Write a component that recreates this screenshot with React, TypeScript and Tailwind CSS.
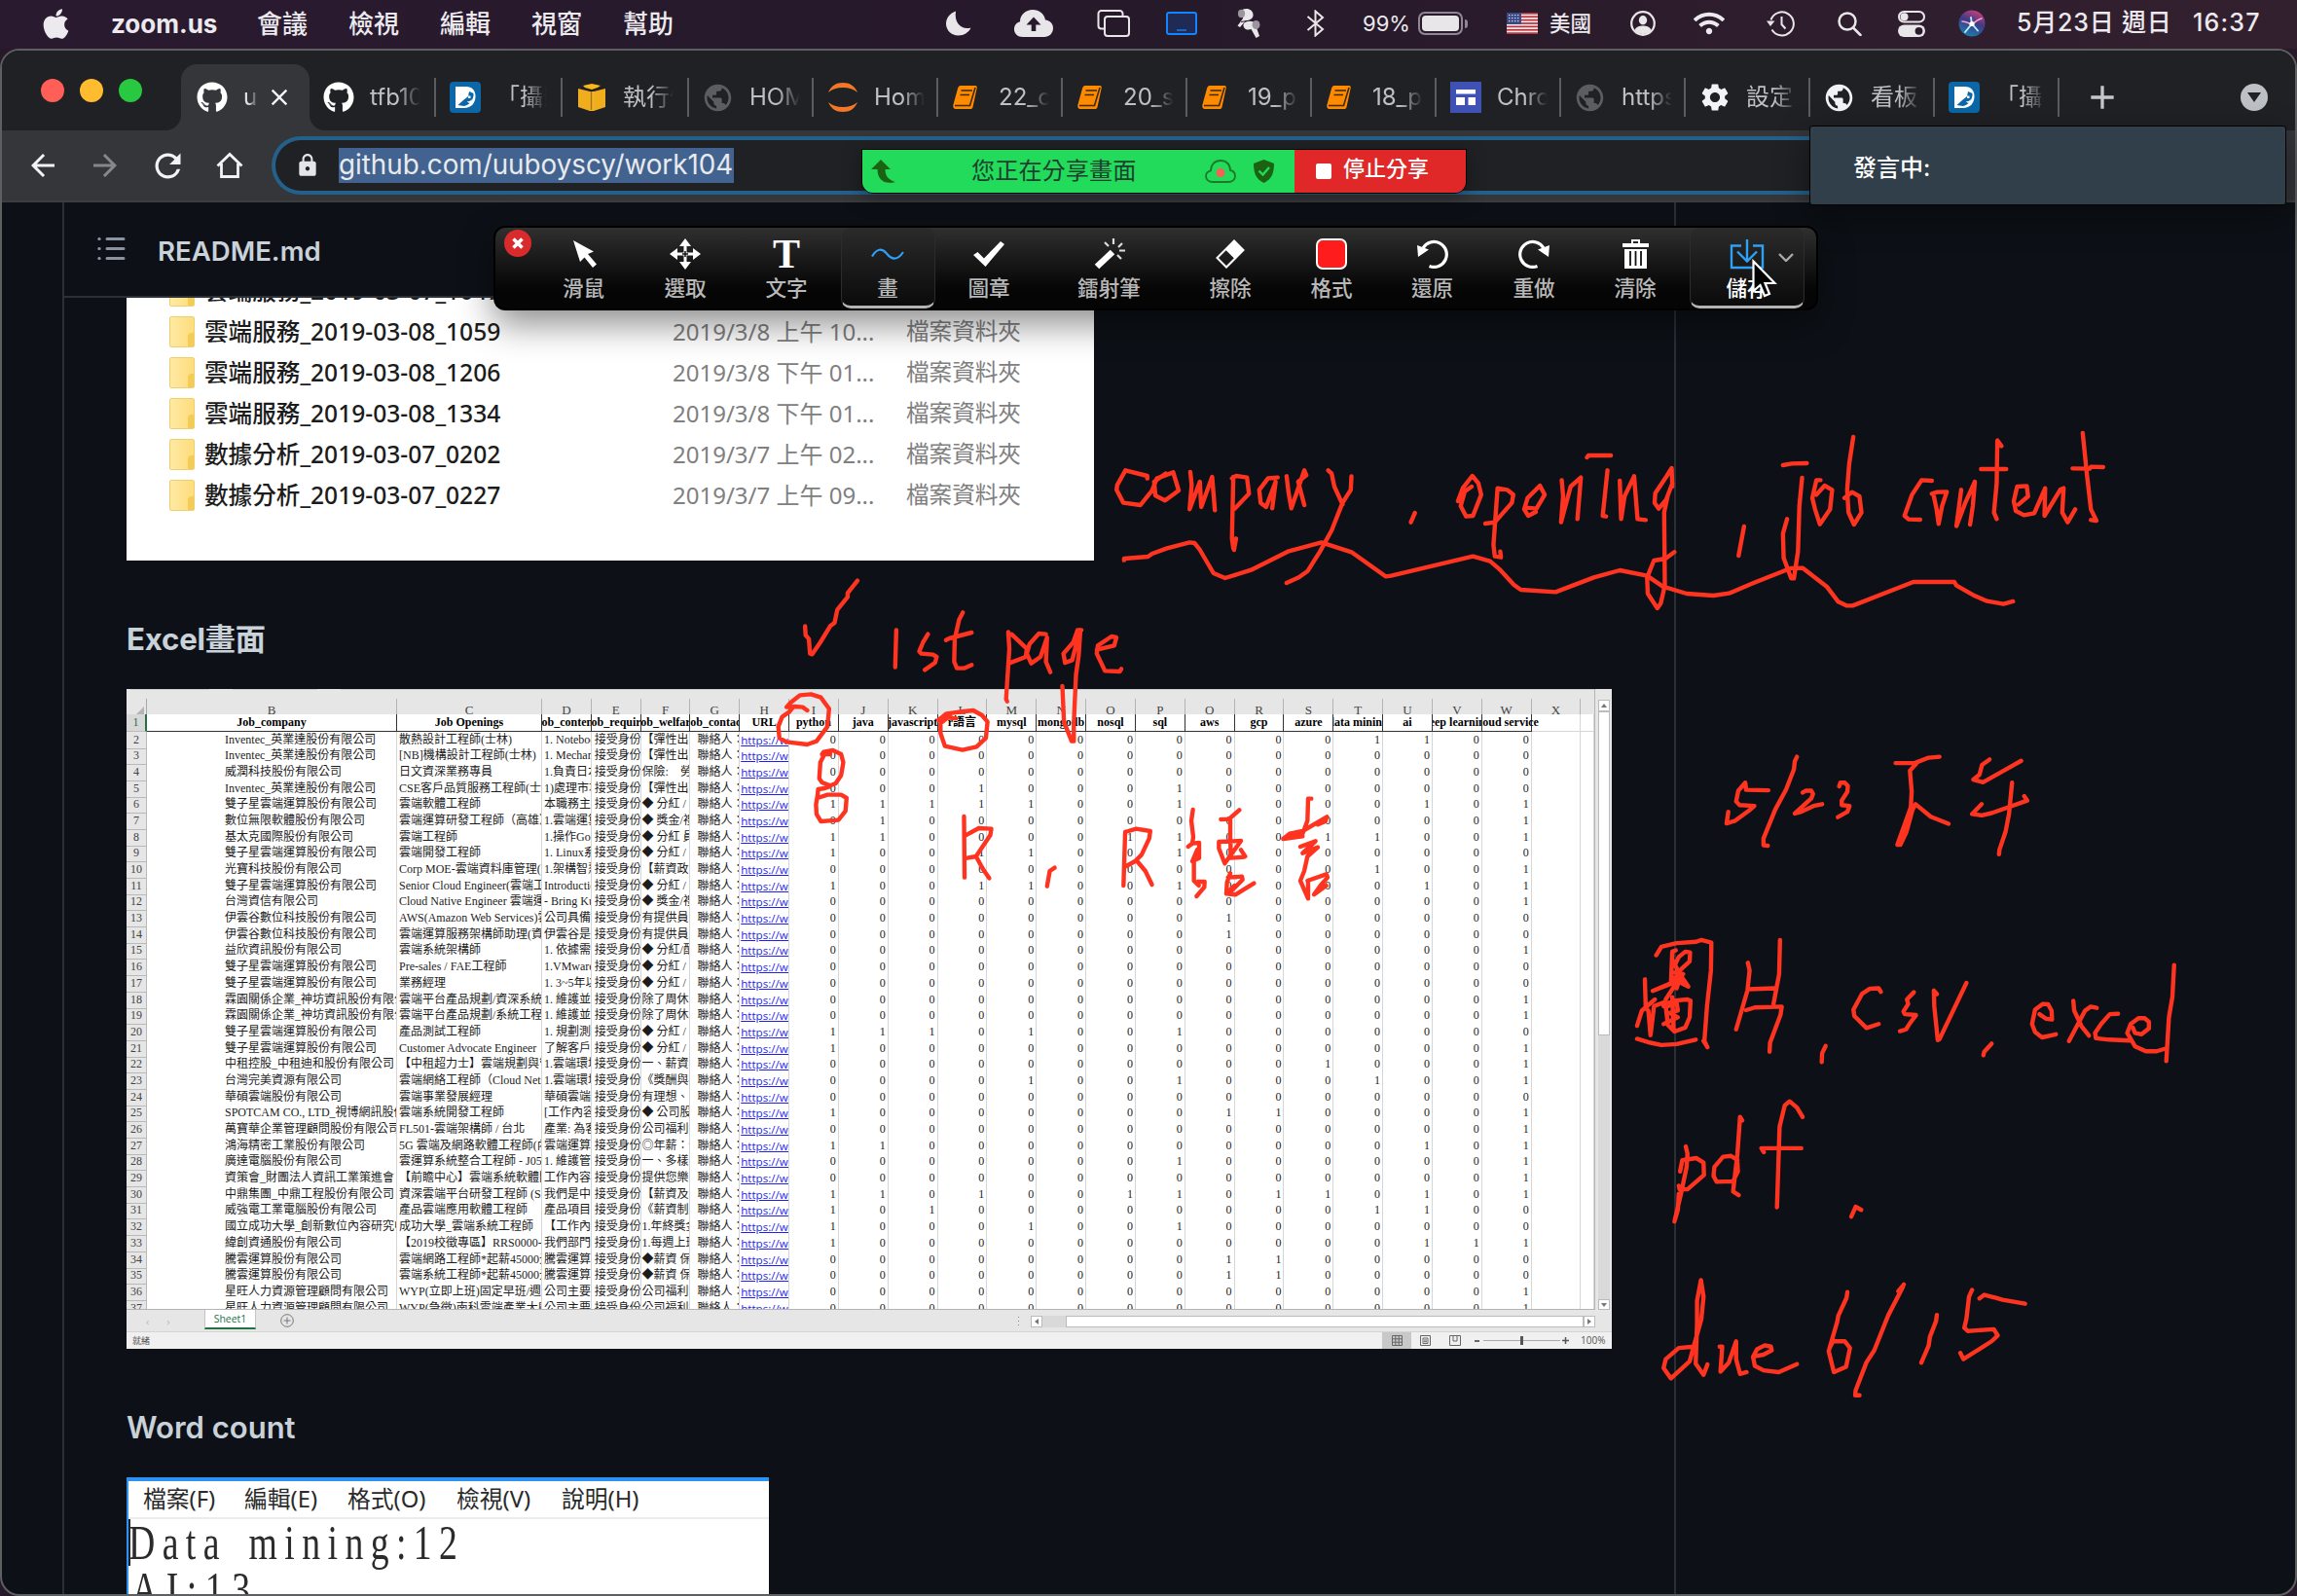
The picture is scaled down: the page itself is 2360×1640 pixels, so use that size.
import React from "react";
import { FaApple, FaGithub, FaWifi } from "react-icons/fa";
import { MdArrowBack, MdArrowForward, MdRefresh, MdLock, MdPublic, MdSettings, MdClose, MdAdd } from "react-icons/md";

/* ---------- macOS menu bar ---------- */

const Moon = () => (
  <svg className="h-[26px] w-[26px]" viewBox="0 0 26 26"><path fill="#e9e6ea" d="M10 0.5C4 2.500 0 7.500 0 13.500C0 20 5.500 25.500 12.500 25.500C18.500 25.500 23.500 22 25.500 17.500C16 20 8 13 10 0.500Z" /></svg>
);
const CloudUp = () => (
  <svg className="h-[28px] w-[40px]" viewBox="0 0 40 28">
    <path fill="#e9e6ea" d="M9 28C3.500 28 0 24.500 0 20C0 16 2.500 13 6 12.200C6 5 12 0 19 0C26 0 31 4.500 32 10.500C37 11 40 14.500 40 19C40 24 36 28 31 28Z" />
    <path fill="#261a2b" d="M20 7.500L27.500 15.500H22.300V22H17.700V15.500H12.500Z" />
  </svg>
);
const Copies = () => (
  <svg className="h-[28px] w-[34px]" viewBox="0 0 34 28" fill="none" stroke="#e9e6ea" strokeWidth="2">
    <path d="M7 19.500H4.500A3 3 0 0 1 1.500 16.500V4A3 3 0 0 1 4.500 1H23.500A3 3 0 0 1 26.500 4V6" />
    <rect x="8" y="7" width="25" height="20" rx="3" />
  </svg>
);
const Tablet = () => (
  <div className="flex h-[24px] w-[32px] items-end justify-center rounded-[3px] border-2 border-[#1384ff] bg-[#1f2b55] pb-[2px]"><div className="h-[2px] w-[10px] bg-[#1a65c0]" /></div>
);
const Buds = () => (
  <svg className="h-[32px] w-[24px]" viewBox="0 0 24 32">
    <path fill="#e9e6ea" d="M6 1.500C12 -0.500 17 3 16.500 8C16 11.500 13 13 9 13L3 20L0.500 18.500L6 11Z" /><ellipse cx="4.500" cy="6" rx="3.600" ry="4.200" fill="#9b959d" />
    <path fill="#e9e6ea" d="M6.500 17C8 13.500 14 13 18 15L23 29L19.500 31L14.500 22C10 23.500 6 21.500 6.500 17Z" /><ellipse cx="19.500" cy="17.500" rx="4" ry="4.500" fill="#9b959d" />
    <path d="M4 14.500L10 13.500M14 13L17 13.500" stroke="#2a1c2e" strokeWidth="1" />
  </svg>
);
const Bluetooth = () => (
  <svg className="h-[28px] w-[19px]" viewBox="0 0 19 28" fill="none" stroke="#e9e6ea" strokeWidth="2"><path d="M1.500 7L17 20L9.500 26.500V1.500L17 8L1.500 21" /></svg>
);
const Battery = () => (
  <div className="flex items-center gap-[2px]">
    <div className="flex h-[24px] w-[46px] rounded-[7px] border-2 border-[#8f8893] p-[2px]"><div className="flex-1 rounded-[4px] bg-[#e9e6ea]" /></div>
    <div className="h-[9px] w-[3px] rounded-r-full bg-[#8f8893]" />
  </div>
);
const Flag = () => (
  <svg className="h-[22px] w-[32px]" viewBox="0 0 32 22">
    <rect width="32" height="22" fill="#f2eeee" />
    {[0, 1, 2, 3, 4, 5, 6].map((i) => <rect key={i} y={i * 3.38} width="32" height="1.700" fill="#b8313b" />)}
    <rect width="15" height="12" fill="#3b4a86" />
    {[2, 5, 8].map((y) => [2, 5, 8, 11].map((x) => <rect key={`${x}-${y}`} x={x} y={y} width="1.400" height="1.200" fill="#d5d8e8" />))}
  </svg>
);
const UserRing = () => (
  <svg className="h-[26px] w-[26px]" viewBox="0 0 26 26">
    <circle cx="13" cy="13" r="11.800" fill="none" stroke="#e9e6ea" strokeWidth="2.200" /><ellipse cx="13" cy="9.700" rx="4.200" ry="4.700" fill="#e9e6ea" /><path fill="#e9e6ea" d="M4.500 20C6 16.500 9 15.500 13 15.500S20 16.500 21.500 20C19 23 16.500 24 13 24S7 23 4.500 20Z" />
  </svg>
);
const Clock = () => (
  <svg className="h-[27px] w-[29px]" viewBox="0 0 29 27" fill="none" stroke="#e9e6ea" strokeWidth="2">
    <path d="M4.500 9.500A12 12 0 1 1 5.500 19.500" /><path d="M15.500 6V14L19.500 18.500" /><path d="M0 10.500H8.500L4 16Z" fill="#e9e6ea" stroke="none" />
  </svg>
);
const Search = () => (
  <svg className="h-[25px] w-[25px]" viewBox="0 0 25 25" fill="none" stroke="#e9e6ea" strokeWidth="2.500"><circle cx="10" cy="10" r="8.500" /><path d="M16 16.500L23.500 24" strokeLinecap="round" /></svg>
);
const Control = () => (
  <svg className="h-[27px] w-[28px]" viewBox="0 0 28 27">
    <rect x="1" y="1" width="26" height="10.500" rx="5.250" fill="none" stroke="#e9e6ea" strokeWidth="2" /><circle cx="6.500" cy="6.200" r="4" fill="#e9e6ea" />
    <rect x="0" y="14.500" width="28" height="12.500" rx="6.250" fill="#e9e6ea" /><circle cx="21.500" cy="20.800" r="3.900" fill="#2a1c2c" />
  </svg>
);
const Siri = () => (
  <svg className="h-[28px] w-[28px]" viewBox="0 0 28 28">
    <defs><linearGradient id="siri" x1="0.700" y1="0" x2="0.300" y2="1"><stop offset="0" stopColor="#c93f7c" /><stop offset="0.450" stopColor="#3f3a86" /><stop offset="1" stopColor="#1c7fb0" /></linearGradient></defs>
    <circle cx="14" cy="14" r="13.500" fill="url(#siri)" />
    <path d="M4 12C8 12 11 14 14 15C17 13 20 10 24 9" stroke="#ff9fc4" strokeWidth="1.600" fill="none" strokeLinecap="round" />
    <path d="M7 23L14 14.500L20 21.500M14 15L13 8" stroke="#b9f2ff" strokeWidth="1.800" fill="none" strokeLinecap="round" /><circle cx="14" cy="14.500" r="2.600" fill="#fff" />
  </svg>
);

const MenuBar = () => (
  <div className="flex h-[50px] w-full items-center bg-gradient-to-r from-[#2a1a30] via-[#26192a] to-[#33202f] pb-[2px] text-[26px] text-[#eceaee]">
    <div className="w-[114px] pl-[40px]"><FaApple className="h-[35px] w-[35px] text-[#eceaee]" /></div>
    <div className="w-[150px] text-[26px] font-bold">zoom.us</div>
    <div className="w-[94px] font-medium">會議</div>
    <div className="w-[94px] font-medium">檢視</div>
    <div className="w-[94px] font-medium">編輯</div>
    <div className="w-[94px] font-medium">視窗</div>
    <div className="w-[332px] font-medium">幫助</div>
    <div className="w-[70px]"><Moon /></div>
    <div className="w-[85px]"><CloudUp /></div>
    <div className="w-[71px]"><Copies /></div>
    <div className="w-[73px]"><Tablet /></div>
    <div className="w-[71px]"><Buds /></div>
    <div className="w-[58px]"><Bluetooth /></div>
    <div className="w-[57px] text-[22px]">99%</div>
    <div className="w-[91px]"><Battery /></div>
    <div className="w-[44px]"><Flag /></div>
    <div className="w-[83px] text-[21.500px] font-medium">美國</div>
    <div className="w-[65px]"><UserRing /></div>
    <div className="w-[75px]"><FaWifi className="h-[32px] w-[32px]" /></div>
    <div className="w-[73px]"><Clock /></div>
    <div className="w-[62px]"><Search /></div>
    <div className="w-[62px]"><Control /></div>
    <div className="w-[60px]"><Siri /></div>
    <div className="w-[181px] text-[25px] font-medium tracking-[0.800px] whitespace-nowrap">5月23日 週日</div>
    <div className="text-[25px] font-medium tracking-[1.200px]">16:37</div>
  </div>
);

/* ---------- browser chrome ---------- */

const Tfb = () => (
  <svg className="h-8 w-8" viewBox="0 0 32 32">
    <rect width="32" height="32" rx="4" fill="#0b67a8" /><path fill="#fff" d="M6 5H17C23 5 26.500 9 26.500 15C26.500 22 22 27 15 27H6Z" />
    <path fill="#0b67a8" d="M8.500 24L14 19L19 15L20 10L24.500 12C25 18 21 23.500 15 25Z" /><path fill="#fff" d="M19 14.500H21.500V17H19ZM18 20C20 20.500 22 19.500 23 18L22.500 21C21 22.500 19 22 18 20Z" />
  </svg>
);
const Cube = () => (
  <svg className="h-8 w-8" viewBox="0 0 32 32"><path fill="#f0ad1e" d="M2 7L14 10V30L2 26ZM18 10L30 7V26L18 30Z" /><path fill="#f5b52a" d="M14 10H18V30H14Z" /><path fill="#fdb913" d="M7 4L16 2L25 4L22 6L16 8L9 6Z" /><path d="M15.500 10V29" stroke="#a87512" strokeWidth="1.500" /></svg>
);
const Jupyter = () => (
  <svg className="h-8 w-8" viewBox="0 0 32 32"><path fill="#f37726" d="M1 11C4 4 9 1 16 1S28 4 31 11C27 7.500 22 6 16 6S5 7.500 1 11ZM1 21C4 28 9 31 16 31S28 28 31 21C27 24.500 22 26 16 26S5 24.500 1 21Z" /></svg>
);
const Book = () => (
  <svg className="h-8 w-8" viewBox="0 0 32 32"><path fill="#ff8a00" d="M9 4H24C25.500 4 26 5 25.700 6.500L21.500 26C21 27.500 20.500 28 19 28H4C2 28 1 26.500 1.300 24L6 7C6.500 5 7.500 4 9 4Z" /><path d="M9.500 9H21M8.500 13.500H18M3 24.500H18.500L24 6" stroke="#3a2a14" strokeWidth="1.600" fill="none" /></svg>
);
const Trello = () => (
  <svg className="h-8 w-8" viewBox="0 0 32 32"><rect width="32" height="32" fill="#3f51b5" /><path fill="#fff" d="M6 8H26V12.500H6ZM6 16H15V24H6ZM18.500 16H26V24H18.500Z" /></svg>
);
const Globe = ({ dim }: { dim?: boolean }) => (
  <MdPublic className={dim ? "-ml-px h-[33px] w-[33px] text-[#5b5d61]" : "-ml-px h-[33px] w-[33px] text-[#f1f3f4]"} />
);

const tabs: { w: string; icon: React.ReactNode; label: string }[] = [
  { w: "w-[130px]", icon: <FaGithub className="h-8 w-8 text-white" />, label: "tfb104" },
  { w: "w-[130px]", icon: <Tfb />, label: "「攝影" },
  { w: "w-[130px]", icon: <Cube />, label: "執行個" },
  { w: "w-[128px]", icon: <Globe dim />, label: "HOME" },
  { w: "w-[128px]", icon: <Jupyter />, label: "Home" },
  { w: "w-[128px]", icon: <Book />, label: "22_c" },
  { w: "w-[128px]", icon: <Book />, label: "20_s" },
  { w: "w-[128px]", icon: <Book />, label: "19_p" },
  { w: "w-[128px]", icon: <Book />, label: "18_p" },
  { w: "w-[128px]", icon: <Trello />, label: "Chro" },
  { w: "w-[128px]", icon: <Globe dim />, label: "https" },
  { w: "w-[128px]", icon: <MdSettings className="-ml-px h-[34px] w-[34px] text-[#f1f3f4]" />, label: "設定" },
  { w: "w-[128px]", icon: <Globe />, label: "看板" },
  { w: "w-[128px]", icon: <Tfb />, label: "「攝" },
];

const TabStrip = () => (
  <div className="flex h-[82px] w-full bg-[#202124]">
    <div className="flex h-full w-[186px] shrink-0 items-center gap-4 pl-[42px]">
      <div className="h-6 w-6 rounded-full bg-[#ff5f57]" /><div className="h-6 w-6 rounded-full bg-[#febc2e]" /><div className="h-6 w-6 rounded-full bg-[#28c840]" />
    </div>
    <div className="relative mt-[14px] flex h-[68px] w-[132px] shrink-0 items-center rounded-t-[16px] bg-[#35363a] pl-4">
      <svg className="absolute bottom-0 -left-4 h-4 w-4" viewBox="0 0 16 16"><path d="M16 0V16H0C9 16 16 9 16 0Z" fill="#35363a" /></svg>
      <svg className="absolute -right-4 bottom-0 h-4 w-4" viewBox="0 0 16 16"><path d="M0 0V16H16C7 16 0 9 0 0Z" fill="#35363a" /></svg>
      <FaGithub className="h-8 w-8 text-white" />
      <div className="ml-4 w-[24px] overflow-hidden text-[24px] text-[#dfe1e5] [mask-image:linear-gradient(to_right,black_20%,transparent_65%)]">u</div>
      <MdClose className="-ml-px h-[28px] w-[28px] text-[#f1f3f4]" />
    </div>
    {tabs.map((t, i) => (
      <div key={i} className={`${t.w} flex h-full shrink-0 items-center pt-[14px] pl-[14px]`}>
        <div className="w-8 shrink-0">{t.icon}</div>
        <div className="ml-4 w-[52px] overflow-hidden text-[24px] whitespace-nowrap text-[#bdc1c6] [mask-image:linear-gradient(to_right,black_55%,transparent_100%)]">{t.label}</div>
        <div className="ml-auto h-10 w-[2px] bg-[#5a5c60]" />
      </div>
    ))}
    <div className="flex flex-1 items-center justify-between pt-[14px] pr-[30px] pl-[24px]">
      <MdAdd className="h-[40px] w-[40px] text-[#c4c7cb]" />
      <div className="flex h-7 w-7 items-center justify-center rounded-full bg-[#bdc1c6]"><svg className="h-[10px] w-[14px]" viewBox="0 0 14 10"><path d="M0 0H14L7 10Z" fill="#202124" /></svg></div>
    </div>
  </div>
);

const Toolbar = () => (
  <div className="flex h-[74px] w-full items-center border-b-2 border-[#3c3d3e] bg-[#35363a]">
    <div className="flex w-[279px] items-center pl-[26px]">
      <MdArrowBack className="h-[36px] w-[36px] text-[#f1f3f4]" />
      <MdArrowForward className="ml-[28px] h-[36px] w-[36px] text-[#85878b]" />
      <MdRefresh className="ml-[27px] h-[39px] w-[39px] text-[#f1f3f4]" />
      <svg className="ml-[30px] h-[28px] w-[28px]" viewBox="0 0 28 28" fill="none" stroke="#f1f3f4" strokeWidth="2.800"><path d="M1.500 14.500L14 2.500L26.500 14.500M5.500 12V25.500H22.500V12" /></svg>
    </div>
    <div className="flex h-[60px] flex-1 items-center rounded-l-full border-4 border-r-0 border-[#24618a] bg-[#202124]">
      <MdLock className="ml-[20px] h-[26px] w-[26px] text-[#e3e5e8]" />
      <div className="ml-[19px] flex h-9 w-[406px] items-center bg-[#42638f] text-[27.800px] whitespace-nowrap text-[#e8eaed]">github.com/uuboyscy/work104</div>
    </div>
    <div className="w-[480px]" />
  </div>
);

/* ---------- file list ---------- */

const files = [
  ["雲端服務_2019-03-07_1647", "2019/3/7 下午 04...", "檔案資料夾"],
  ["雲端服務_2019-03-08_1059", "2019/3/8 上午 10...", "檔案資料夾"],
  ["雲端服務_2019-03-08_1206", "2019/3/8 下午 01...", "檔案資料夾"],
  ["雲端服務_2019-03-08_1334", "2019/3/8 下午 01...", "檔案資料夾"],
  ["數據分析_2019-03-07_0202", "2019/3/7 上午 02...", "檔案資料夾"],
  ["數據分析_2019-03-07_0227", "2019/3/7 上午 09...", "檔案資料夾"],
];

const FileList = () => (
  <div className="flex h-[270px] w-[994px] flex-col overflow-hidden bg-white">
    <div className="-mt-[28px]">
      {files.map((f, i) => (
        <div key={i} className="flex h-[42px] items-center pl-[44px] font-['Noto_Sans','Noto_Sans_CJK_TC',sans-serif] text-[24px] whitespace-nowrap">
          <div className="flex h-[32px] w-[26px] items-end justify-end rounded-[2px] border border-[#efcf6c] bg-gradient-to-r from-[#ffe9a2] to-[#fddd7c]"><div className="h-[14px] w-[6px] rounded-tl bg-[#f3cb55]" /></div>
          <div className="ml-[10px] w-[481px] text-[24.600px] font-medium text-[#1c1c1c]">{f[0]}</div>
          <div className="w-[240px] text-[#808080]">{f[1]}</div>
          <div className="text-[23.600px] text-[#808080]">{f[2]}</div>
        </div>
      ))}
    </div>
  </div>
);

/* ---------- spreadsheet ---------- */

const letters = "BCDEFGHIJKLMNOPQRSTUVWX".split("");
const heads = ["Job_company", "Job Openings", "Job_content", "Job_require", "Job_welfare", "Job_contact", "URL", "python", "java", "javascript", "r語言", "mysql", "mongodb", "nosql", "sql", "aws", "gcp", "azure", "data mining", "ai", "deep learning", "cloud service", ""];

const jobs: [string, string, string, string, string][] = [
  ["Inventec_英業達股份有限公司", "散熱設計工程師(士林)", "1. Notebook", "【彈性出勤", "000000000001100"],
  ["Inventec_英業達股份有限公司", "[NB]機構設計工程師(士林)", "1. Mechanical", "【彈性出勤", "000000000000000"],
  ["威潤科技股份有限公司", "日文資深業務專員", "1.負責日本", "保險:　勞保", "000000000000000"],
  ["Inventec_英業達股份有限公司", "CSE客戶品質服務工程師(士林)", "1)處理市場", "【彈性出勤", "000100010000000"],
  ["雙子星雲端運算股份有限公司", "雲端軟體工程師", "本職務主要", "◆ 分紅 / 獎", "111110010000101"],
  ["數位無限軟體股份有限公司", "雲端運算研發工程師（高雄）", "1.雲端運算", "◆ 獎金/禮品", "010000000000001"],
  ["基太克國際股份有限公司", "雲端工程師", "1.操作Google", "◆ 分紅 員工", "110000110011001"],
  ["雙子星雲端運算股份有限公司", "雲端開發工程師", "1. Linux系統", "◆ 分紅 / 獎", "100110010000000"],
  ["光寶科技股份有限公司", "Corp MOE-雲端資料庫管理(DBA)", "1.架構智慧", "【薪資政策", "000000000001001"],
  ["雙子星雲端運算股份有限公司", "Senior Cloud Engineer(雲端工程師)", "Introduction", "◆ 分紅 / 獎", "100110010000101"],
  ["台灣資信有限公司", "Cloud Native Engineer 雲端運算", "- Bring Kube", "◆ 獎金/禮品", "000000000000001"],
  ["伊雲谷數位科技股份有限公司", "AWS(Amazon Web Services)雲端", "公司具備完", "有提供員工", "000000001000000"],
  ["伊雲谷數位科技股份有限公司", "雲端運算服務架構師助理(資訊)", "伊雲谷是一", "有提供員工", "000000001000000"],
  ["益欣資訊股份有限公司", "雲端系統架構師", "1. 依據需求", "◆ 分紅/配股", "000000000000001"],
  ["雙子星雲端運算股份有限公司", "Pre-sales / FAE工程師", "1.VMware產", "◆ 分紅 / 獎", "000000000000000"],
  ["雙子星雲端運算股份有限公司", "業務經理", "1. 3~5年以上", "◆ 分紅 / 獎", "000000000000000"],
  ["霖園關係企業_神坊資訊股份有限公司", "雲端平台產品規劃/資深系統工程", "1. 維護並開", "除了周休二", "000000000000001"],
  ["霖園關係企業_神坊資訊股份有限公司", "雲端平台產品規劃/系統工程師", "1. 維護並開", "除了周休二", "000000000000001"],
  ["雙子星雲端運算股份有限公司", "產品測試工程師", "1. 規劃測試", "◆ 分紅 / 獎", "111010010000000"],
  ["雙子星雲端運算股份有限公司", "Customer Advocate Engineer", "了解客戶需", "◆ 分紅 / 獎", "100000000000001"],
  ["中租控股_中租迪和股份有限公司", "【中租超力士】雲端規劃與管理", "1.雲端環境", "一、薪資獎", "000000000010001"],
  ["台灣完美資源有限公司", "雲端網絡工程師（Cloud Network", "1.雲端環境", "《獎酬與福", "000010010001001"],
  ["華碩雲端股份有限公司", "雲端事業發展經理", "華碩雲端股", "有理想、有", "000000000000000"],
  ["SPOTCAM CO., LTD_視博網訊股份有限", "雲端系統開發工程師", "[工作內容]", "◆ 公司股票", "100000001100001"],
  ["萬寶華企業管理顧問股份有限公司", "FL501-雲端架構師 / 台北", "產業: 為客戶", "公司福利制", "000000000000001"],
  ["鴻海精密工業股份有限公司", "5G 雲端及網路軟體工程師(內湖)", "雲端運算平", "◎年薪：保", "110000000000101"],
  ["廣達電腦股份有限公司", "雲運算系統整合工程師 - J0540", "1. 維護管理", "一、多樣化", "000000010000001"],
  ["資策會_財團法人資訊工業策進會", "【前瞻中心】雲端系統軟體開發", "工作內容：", "提供您樂活", "000000000000001"],
  ["中鼎集團_中鼎工程股份有限公司", "資深雲端平台研發工程師 (Senior)", "我們是中鼎", "【薪資及獎", "110100110110101"],
  ["威強電工業電腦股份有限公司", "產品雲端應用軟體工程師", "產品項目：", "《薪資制度", "101000000001100"],
  ["國立成功大學_創新數位內容研究中心", "成功大學_雲端系統工程師", "【工作內容", "1.年終獎金", "100010010000000"],
  ["緯創資通股份有限公司", "【2019校徵專區】RRS0000-雲端", "我們部門主", "1.每週上班", "100000000000111"],
  ["騰雲運算股份有限公司", "雲端網路工程師*起薪45000元", "騰雲運算公", "◆薪資 保障", "000000001100000"],
  ["騰雲運算股份有限公司", "雲端系統工程師*起薪45000元", "騰雲運算公", "◆薪資 保障", "000000001100000"],
  ["星旺人力資源管理顧問有限公司", "WYP(立即上班)固定早班/週休", "公司主要從", "公司福利制", "000000000000001"],
  ["星旺人力資源管理顧問有限公司", "WYP(急徵)南科雲端產業大廠", "公司主要從", "公司福利制", "000000000000001"],
];

const cols = "grid grid-cols-[21px_257px_149px_repeat(5,50.800px)_repeat(16,50.850px)_14px]";
const cell = "overflow-hidden whitespace-nowrap border-r border-b border-[#d6d6d6] bg-white";
const headCell = "flex items-center justify-center border-r border-b border-[#333] bg-white text-[12px] font-bold whitespace-nowrap text-black";

const Sheet = () => (
  <div className="flex h-[678px] w-[1526px] flex-col overflow-hidden bg-[#e6e6e6] font-['Liberation_Serif','Noto_Sans_CJK_TC',serif] text-[12px] leading-[17px] text-[#1c1c1c]">
    <div className="flex h-[638px]">
      <div className="flex w-[1509px] flex-col overflow-hidden border-r border-b border-[#b4b4b4]">
        <div className="flex h-[10px] shrink-0 items-start gap-[24px] pl-[4px]"><div className="h-px w-[82px] bg-[#cfcfcf]" /><div className="h-px w-[88px] bg-[#cfcfcf]" /><div className="h-px w-[1300px] bg-[#cfcfcf]" /></div>
        <div className={`${cols} h-[16px] shrink-0 text-[13px] text-[#444]`}>
          <div className="flex items-end justify-end border-r border-b border-[#a8a8a8] p-[2px]"><svg className="h-[10px] w-[10px]" viewBox="0 0 10 10"><path d="M10 0V10H0Z" fill="#b4b4b4" /></svg></div>
          {letters.map((l) => <div key={l} className="flex items-center justify-center border-r border-b border-[#b4b4b4] pt-[3px]">{l}</div>)}
          <div className="border-b border-[#b4b4b4]" />
        </div>
        <div className={`${cols} h-[17.500px] shrink-0`}>
          <div className="flex items-center justify-center border-r-2 border-b border-r-[#217346] border-b-[#bbb] bg-[#d8d8d8] text-[#217346]">1</div>
          {heads.map((h, i) => (
            <div key={i} className={i === 21 ? `${headCell} relative z-10 [clip-path:inset(0_-12px_0_0)]` : i === 22 ? cell : `${headCell} overflow-hidden`}>{h}</div>
          ))}
          <div className={cell} />
        </div>
        {jobs.map((j, r) => (
          <div key={r} className={`${cols} h-[16.700px] shrink-0`}>
            <div className="flex items-center justify-center border-r border-b border-[#b9b9b9] text-[#444]">{r + 2}</div>
            <div className={`${cell} pl-[80px]`}>{j[0]}</div>
            <div className={`${cell} pl-[2px]`}>{j[1]}</div>
            <div className={`${cell} pl-[2px]`}>{j[2]}</div>
            <div className={`${cell} pl-[3px]`}>接受身份</div>
            <div className={`${cell} pl-[1px]`}>{j[3]}</div>
            <div className={`${cell} pl-[7px]`}>聯絡人：</div>
            <div className={`${cell} pl-[1px] font-['Open_Sans',sans-serif] text-[11.600px] font-medium text-[#1f1fee] underline`}>https://www</div>
            {j[4].split("").map((n, i) => <div key={i} className={`${cell} pr-[2px] text-right`}>{n}</div>)}
            <div className={cell} /><div className={cell} />
          </div>
        ))}
      </div>
      <div className="flex w-[17px] flex-col items-center pt-[11px]">
        <div className="flex h-[12px] w-[12px] items-center justify-center border border-[#bbb] bg-white"><svg className="h-[4px] w-[6px]" viewBox="0 0 6 4"><path d="M3 0L6 4H0Z" fill="#777" /></svg></div>
        <div className="h-[333px] w-[12px] border border-[#bbb] bg-white" />
        <div className="h-[271px] w-[12px] bg-[#d9d9d9]" />
        <div className="flex h-[11px] w-[12px] items-center justify-center border border-[#bbb] bg-white"><svg className="h-[4px] w-[6px]" viewBox="0 0 6 4"><path d="M3 4L6 0H0Z" fill="#777" /></svg></div>
      </div>
    </div>
    <div className="flex h-[22px] items-start font-['Open_Sans','Noto_Sans_CJK_TC',sans-serif]">
      <div className="flex h-full w-[80px] items-center gap-[18px] pl-[20px] text-[11px] text-[#b8b8b8]"><span>‹</span><span>›</span></div>
      <div className="flex h-[20px] w-[53px] items-center justify-center border-x border-b-2 border-x-[#c4c4c4] border-b-[#217346] bg-white text-[10.500px] font-medium text-[#217346]">Sheet1</div>
      <svg className="mt-[4px] ml-[25px] h-[14px] w-[14px]" viewBox="0 0 14 14" fill="none" stroke="#777"><circle cx="7" cy="7" r="6.300" /><path d="M7 3.500V10.500M3.500 7H10.500" /></svg>
      <div className="mt-[7px] ml-[744px] flex h-[9px] w-[13px] flex-col justify-between"><div className="h-px w-px bg-[#888]" /><div className="h-px w-px bg-[#888]" /><div className="h-px w-px bg-[#888]" /></div>
      <div className="mt-[6px] flex h-[12px]">
        <div className="flex w-[12px] items-center justify-center border border-[#bbb] bg-white"><svg className="h-[6px] w-[4px]" viewBox="0 0 4 6"><path d="M0 3L4 0V6Z" fill="#777" /></svg></div>
        <div className="w-[24px] bg-[#d9d9d9]" />
        <div className="w-[532px] border border-[#bbb] bg-white" />
        <div className="flex w-[12px] items-center justify-center border border-[#bbb] bg-white"><svg className="h-[6px] w-[4px]" viewBox="0 0 4 6"><path d="M4 3L0 0V6Z" fill="#777" /></svg></div>
      </div>
    </div>
    <div className="flex h-[18px] items-center border-t border-[#d4d4d4] bg-[#f0f0f0] font-['Open_Sans','Noto_Sans_CJK_TC',sans-serif] text-[9px] text-[#555]">
      <div className="w-[1290px] pl-[6px]">就緒</div>
      <div className="flex h-full w-[30px] items-center justify-center bg-[#c8c8c8]"><svg className="h-[11px] w-[11px]" viewBox="0 0 11 11" fill="none" stroke="#666"><path d="M0.500 0.500H10.500V10.500H0.500ZM0.500 3.800H10.500M0.500 7.200H10.500M3.800 0.500V10.500M7.200 0.500V10.500" /></svg></div>
      <svg className="ml-[9px] h-[11px] w-[11px]" viewBox="0 0 11 11" fill="none" stroke="#666"><path d="M0.500 0.500H10.500V10.500H0.500ZM3 3H8V8.500H3ZM4 5H7M4 6.700H7" /></svg>
      <svg className="ml-[19px] h-[11px] w-[12px]" viewBox="0 0 12 11" fill="none" stroke="#666"><path d="M0.500 0.500H11.500V10.500H0.500ZM4 0.500V6M4 6H8V0.500" /></svg>
      <div className="ml-[14px] h-[2px] w-[5px] bg-[#666]" />
      <div className="relative ml-[4px] h-px w-[79px] bg-[#aaa]"><div className="absolute -top-[4px] left-[38px] h-[9px] w-[3px] bg-[#555]" /></div>
      <svg className="ml-[2px] h-[7px] w-[7px]" viewBox="0 0 7 7" stroke="#555" strokeWidth="1.500"><path d="M3.500 0V7M0 3.500H7" /></svg>
      <div className="ml-[12px] text-[10px]">100%</div>
    </div>
  </div>
);

/* ---------- notepad ---------- */

const Notepad = () => (
  <div className="flex h-[122px] w-[660px] flex-col overflow-hidden border-t-4 border-l-2 border-[#2a93f3] bg-white">
    <div className="flex h-[39px] shrink-0 items-center border-b-2 border-[#ececec] pl-[15px] font-['Noto_Sans','Noto_Sans_CJK_TC',sans-serif] text-[23.800px] whitespace-nowrap text-[#2a2a2a]">
      <div className="w-[104px]">檔案(F)</div><div className="w-[106px]">編輯(E)</div><div className="w-[112px]">格式(O)</div><div className="w-[108px]">檢視(V)</div><div>說明(H)</div>
    </div>
    <div className="flex h-[100px] shrink-0 font-['Liberation_Serif',serif] text-[51px] leading-[48px] text-[#2b2b2b]">
      <div className="h-[48px] w-[2px] bg-[#222]" />
      <div className="-ml-[2px] flex origin-left scale-x-[0.740] flex-col whitespace-nowrap"><span className="tracking-[10px] [word-spacing:8px]">Data mining:12</span><span className="pl-[4px] tracking-[11.500px]">AI:13</span></div>
    </div>
  </div>
);

/* ---------- screen share overlays ---------- */

const tool = "flex h-full shrink-0 flex-col items-center";
const toolIcon = "mt-[9px] flex h-[36px] items-center justify-center text-white";
const toolLabel = "mt-[4px] text-[21.600px] leading-[26px] font-medium whitespace-nowrap text-[#b8b8b8]";

const Tool = ({ w, label, children }: { w: string; label: string; children: React.ReactNode }) => (
  <div className={`${tool} ${w}`}><div className={toolIcon}>{children}</div><div className={toolLabel}>{label}</div></div>
);

const DrawBar = () => (
  <div className="absolute top-[232px] left-[507px] flex h-[87px] w-[1361px] rounded-[12px] border-2 border-black bg-gradient-to-b from-[#303030] to-[#050505] to-80% shadow-[0_14px_36px_rgba(0,0,0,0.45)]">
    <div className="flex w-[38px] shrink-0 justify-end pt-[2px] pr-px"><svg className="h-7 w-7" viewBox="0 0 28 28"><circle cx="14" cy="14" r="14" fill="#d92b2b" /><path d="M9.500 9.500L18.500 18.500M18.500 9.500L9.500 18.500" stroke="#fff" strokeWidth="3.600" /></svg></div>
    <Tool w="w-[105px]" label="滑鼠"><svg className="h-[28px] w-[28px]" viewBox="0 0 28 28"><path fill="#fff" d="M3 0L24 11.500L18 14L27 24.500L23 28L14.500 17.500L10 22Z" /></svg></Tool>
    <Tool w="w-[104px]" label="選取"><svg className="h-8 w-8" viewBox="0 0 32 32"><path fill="#fff" d="M16 0L22 8H17.500V14.500H24V10L32 16L24 22V17.500H17.500V24H22L16 32L10 24H14.500V17.500H8V22L0 16L8 10V14.500H14.500V8H10Z" /><path d="M13 16H19M16 13V19" stroke="#111" strokeWidth="1.500" /></svg></Tool>
    <Tool w="w-[104px]" label="文字"><span className="font-['Liberation_Serif',serif] text-[42px] leading-none font-bold">T</span></Tool>
    <div className="flex w-[104px] shrink-0 flex-col items-center"><div className="flex h-full w-[97px] flex-col items-center rounded-[10px] border-x border-b-[3px] border-x-[#2c2c2c] border-b-[#b4b4b4] bg-gradient-to-b from-[#2b2b2b] to-[#0b0b0b]"><div className={toolIcon}><svg className="h-[13px] w-[34px]" viewBox="0 0 34 13" fill="none" stroke="#2ea0f5" strokeWidth="2.200"><path d="M1 8.500C6 0 11 0 16 5.500C21 12 27 13 33 4" /></svg></div><div className={toolLabel}>畫</div></div></div>
    <Tool w="w-[104px]" label="圖章"><svg className="h-[26px] w-[32px]" viewBox="0 0 32 26"><path fill="#fff" d="M0 14L4.500 11L11 17.500L28 0L32 3L12.500 26Z" /></svg></Tool>
    <Tool w="w-[143px]" label="鐳射筆"><svg className="h-8 w-8" viewBox="0 0 32 32"><path d="M3 29L19 14" stroke="#fff" strokeWidth="6.500" /><path d="M20 0V6M11 4L15 8M29 5L25 9M26 12.500H32M24 17L28 21" stroke="#ddd" strokeWidth="2.200" /></svg></Tool>
    <Tool w="w-[106px]" label="擦除"><svg className="h-[30px] w-[30px]" viewBox="0 0 30 30"><path d="M1.500 19L19 1.500L28.500 11L11 28.500Z" fill="none" stroke="#fff" strokeWidth="2" /><path fill="#fff" d="M10 10.500L19 1.500L28.500 11L19.500 20Z" /></svg></Tool>
    <Tool w="w-[102px]" label="格式"><div className="h-8 w-8 rounded-[7px] border-2 border-white bg-[#ff1c1c]" /></Tool>
    <Tool w="w-[105px]" label="還原"><svg className="h-[32px] w-[34px]" viewBox="0 0 34 32"><path d="M7 10A13 13 0 1 1 13.500 28.500" fill="none" stroke="#fff" strokeWidth="3.200" /><path fill="#fff" d="M1 7L13 11.500L2 19Z" /></svg></Tool>
    <Tool w="w-[104px]" label="重做"><svg className="h-[32px] w-[34px] -scale-x-100" viewBox="0 0 34 32"><path d="M7 10A13 13 0 1 1 13.500 28.500" fill="none" stroke="#fff" strokeWidth="3.200" /><path fill="#fff" d="M1 7L13 11.500L2 19Z" /></svg></Tool>
    <Tool w="w-[104px]" label="清除"><svg className="h-[30px] w-[27px]" viewBox="0 0 27 30"><path fill="#fff" d="M9 0H18V4H27V8H0V4H9ZM11 2V4H16V2ZM2 10H25V30H2Z" /><path d="M8 12V27M13.500 12V27M19 12V27" stroke="#111" strokeWidth="1.800" /></svg></Tool>
    <div className="ml-[4px] flex h-full w-[118px] shrink-0 rounded-[10px] border-x border-b-[3px] border-x-[#2c2c2c] border-b-[#b4b4b4] bg-gradient-to-b from-[#2b2b2b] to-[#0b0b0b] pl-[25px]">
      <div className="flex w-[66px] flex-col items-center"><div className={toolIcon}><svg className="h-[32px] w-[36px]" viewBox="0 0 36 32" fill="none" stroke="#2ea0f5" strokeWidth="2.400"><path d="M12 7.500H2V30H34V7.500H24M18 1V23M8 13.500L18 23.500L28 13.500" /></svg></div><div className="mt-[4px] text-[21.600px] leading-[26px] font-medium whitespace-nowrap text-white">儲存</div></div>
      <svg className="mt-[26px] -ml-px h-[9px] w-[16px]" viewBox="0 0 16 9" fill="none" stroke="#a8a8a8" strokeWidth="2.400"><path d="M1 1L8 8L15 1" /></svg>
    </div>
  </div>
);

const ShareBar = () => (
  <div className="absolute top-[153px] left-[885px] flex h-[46px] w-[622px] overflow-hidden rounded-b-[12px] border border-black shadow-[0_6px_20px_rgba(0,0,0,0.35)]">
    <div className="flex w-[444px] items-center bg-[#23db5a]">
      <svg className="ml-[9px] h-[25px] w-[25px]" viewBox="0 0 25 25"><path fill="#1b6313" d="M10 0L20 10H14.500C14.500 17 18 21 25 23C14 26 6.500 21 6.500 10H0Z" /></svg>
      <div className="ml-[78px] w-[170px] text-[24.200px] whitespace-nowrap text-[#1f4030]">您正在分享畫面</div>
      <svg className="ml-[70px] h-[24px] w-[32px]" viewBox="0 0 32 24"><path d="M8 23C4 23 1 20.500 1 17C1 14 3 12 6 11.300C6 5 10 1 16 1S26 5 26 11C29 11.500 31 14 31 17C31 20.500 28 23 24 23Z" fill="none" stroke="#1b7a2a" strokeWidth="1.800" /><circle cx="16" cy="13.500" r="4.600" fill="#f06458" /></svg>
      <svg className="ml-[18px] h-[24px] w-[21px]" viewBox="0 0 21 24"><path fill="#1b6313" d="M10.500 0L21 4C21 13 19 20 10.500 24C2 20 0 13 0 4Z" /><path d="M5.500 11.500L9.500 15.500L16 8" fill="none" stroke="#23db5a" strokeWidth="2.400" /></svg>
    </div>
    <div className="flex flex-1 items-center bg-[#e02828] pl-[22px]"><div className="h-4 w-4 rounded-[2px] bg-white" /><div className="ml-[12px] pb-[5px] text-[22px] font-medium whitespace-nowrap text-white">停止分享</div></div>
  </div>
);

const Speaking = () => (
  <div className="absolute top-[129px] left-[1859px] flex h-[82px] w-[490px] items-center rounded-[3px] border border-black bg-[#303f4a] pt-[6px] pl-[44px] text-[24px] font-medium text-white shadow-[0_12px_34px_rgba(0,0,0,0.45)]">發言中:</div>
);

/* ---------- freehand ink ---------- */

const inkTop = [
  "M98 215L98 207L66 190L54 235L53 250L63 290L88 297L105 252L112 215L136 196L144 252L124 283L110 268L108 225L125 200",
  "M161 195L163 235L160 310L175 225L177 303L193 210L197 313",
  "M225 435L228 400M224 210L222 400L224 430M222 215L228 207L244 212L247 262L226 308",
  "M289 212L275 214L262 250L264 290L272 303L286 225L281 307",
  "M302 208L305 260L309 307L328 190L331 205L319 225L328 297",
  "M363 190L368 200L372 240L384 295M397 208L396 250L384 290L368 375L351 440L333 500L320 520L302 537",
  "M490 321L484 350",
  "M553 285L560 245L574 207L583 230L587 265L575 330L565 332L557 300L563 255L573 240",
  "M611 245L605 420L607 455L616 458L615 440M611 245L625 250L634 265L632 290L607 350L593 354",
  "M653 305L668 308L680 265L673 237L655 275L650 310L656 330L667 318",
  "M705 220L707 270L704 350L718 240L733 212L728 340",
  "M772 190L765 330L770 332M742 150L744 144L777 144",
  "M790 222L792 340L797 270L811 208L816 340L828 343",
  "M867 240L866 183L858 210L842 260L841 290L847 308L858 280L867 230M860 270L855 320L856 545L850 600L845 615L831 570L830 520L840 468L857 462L870 442",
  "M972 363L964 453",
  "M1057 213L1053 300L1051 440L1045 523L1041 523L1030 460L1029 385L1035 340M1029 174L1042 169L1064 168",
  "M1084 220L1078 220L1072 275L1076 310L1083 356L1098 310L1101 250L1090 237L1078 265",
  "M1132 87L1126 170L1123 250L1125 320L1133 357L1144 320L1141 270L1130 257L1119 275",
  "M1247 222L1232 220L1218 265L1207 330L1213 341L1230 342",
  "M1247 262L1255 257L1269 256L1262 300L1257 355L1254 310L1250 270M1290 250L1283 362L1296 290L1310 225L1307 300L1303 357",
  "M1349 115L1343 98L1342 230L1338 320L1342 340M1319 186L1356 186",
  "M1374 295L1388 270L1386 238L1372 240L1367 285L1370 315L1382 328L1397 322L1413 245L1412 330L1435 250L1440 245L1438 320L1446 350L1457 310",
  "M1468 75L1474 200L1480 310L1488 345L1480 343M1453 184L1478 185L1480 179L1498 180",
  "M64 467L64 462L99 456L105 447L127 430L160 412L167 414L175 435L195 507L212 522L250 497L304 440L353 412L397 442L447 517L455 515L575 455L600 470L615 497L635 543L645 558L696 565L752 520L790 498L830 515L853 548L888 570L927 576L950 569L985 538L1040 492L1058 491L1093 548L1110 595L1122 607L1131 607L1220 534L1280 534L1283 545L1310 577L1328 593L1352 602L1366 594",
];
const inkSheet = [
  "M84 130L85 158L91 170L93 215L97 217L112 180L130 130L138 120L143 80L162 40L162 28L180 -10",
  "M251 142L249 257",
  "M309 155L300 180L293 208L297 215L318 218L325 225L322 243L303 265",
  "M373 88L366 110L358 170L357 240L362 260L375 260L389 250M342 173L348 168L389 150",
  "M456 148L458 200L452 355L454 362M456 160L462 155L490 200L488 225L457 245",
  "M525 155L512 153L495 185L490 215L498 245L515 225L527 165L525 240L533 272",
  "M590 142L583 142L575 180L557 215L560 243L573 235L583 170L588 142L585 220L580 280L576 430L576 485L572 485L558 425L555 315",
  "M618 203L650 190L654 165L645 162L620 190L618 215L633 268L660 270L663 262",
  "M88 390L80 380L65 378L50 380L58 365L75 343L95 340L113 350L128 385L125 440L105 485L88 495L50 487L37 475L35 440L42 410L55 395L62 380",
  "M360 415L345 412L328 420L343 400L375 393L392 390L408 405L418 425L415 475L398 502L372 512L340 500L332 460L332 430L350 405",
  "M130 525L115 525L118 518L135 513L150 525L154 550L150 590L140 615L130 622L115 612L110 600L112 550L118 530",
  "M128 625L120 630L108 633L107 650L104 680L105 710L113 732L145 728L158 700L160 660L150 650L125 650L107 660",
  "M375 717L376 905M378 775L402 753L425 755L423 775L397 840L381 845M397 840L410 880L421 907",
  "M541 875L532 885L527 932",
  "M670 765L667 930M670 765L690 755L716 762L714 785L700 835L688 855L672 870M692 855L707 885L719 927",
];
const inkGlyphs = [
  "M47 66L42 100L48 150L45 170L32 180M47 170L66 168L66 215L45 225L60 190L50 215L50 285M50 285L65 300L62 288L83 288L82 305L58 333",
  "M133 96L158 95L190 67M162 95L162 160M127 165L195 162L145 232L127 185L127 165M163 165L163 215L205 212M195 190L208 210",
  "M162 262L152 290L150 325M155 275L198 272L200 282L160 322M175 300L150 325L178 328L235 293",
  "M412 32L402 32L400 100L385 140L325 156L345 140L385 132L460 88L455 102L432 112M325 156L385 148",
  "M378 180L425 163L385 200L432 182L400 210L390 255L378 285L402 340M400 285L458 265L462 275L440 300L420 328L458 300M402 285L402 340",
];
const inkRight = [
  "M396 157L345 156L343 140L327 158L322 182L330 190L364 192L352 202L320 225L300 231L304 205",
  "M462 82L457 92L455 110L437 155L412 200L385 265L385 280L395 281",
  "M475 162L482 158L495 158L499 165L495 175L457 209L472 205L500 192L520 188",
  "M559 148L562 140L572 140L579 147L578 160L565 180L565 190L583 192L578 205L556 217",
  "M689 96L733 96L765 84L790 82M737 97L722 113L726 160L724 195L693 279L700 279L714 250L728 200L735 188L770 216L811 232",
  "M905 88L888 100L882 122L868 133L890 139L940 112L978 91M887 188L865 210L887 213L910 208L992 180L985 170M957 140L950 210L942 250L928 290L927 300",
  "M138 526L150 507L185 499L230 496L242 492L265 498L264 560L255 640L249 718L256 732L247 718M94 713L125 722L150 727L185 725L229 715",
  "M112 580L114 645L120 650L125 705L133 640L160 630M94 684L105 650L135 625",
  "M183 515L175 518L172 590L130 606L185 583L212 596L190 565L178 590M180 550L190 530L205 518L216 520L215 540L190 562M183 590L160 625M195 570L185 600M178 540L190 565M180 565L200 568M176 575L196 580",
  "M155 640L175 628L210 625L217 628L215 665L205 688L180 697L165 682L160 640M165 640L185 632L188 650L168 655L188 665L155 680M175 620L178 690",
  "M349 543L353 560L348 605L322 692M423 492L421 568L408 635M350 602L410 600M345 649L365 643L427 641L424 660L400 722L399 742",
  "M528 729L520 745L519 765",
  "M655 608L650 600L630 601L612 612L592 648L594 662L622 689L650 680",
  "M731 609L715 625L718 635L707 652L710 658L736 660L722 678L713 692L699 696",
  "M784 613L777 605L778 640L786 716L790 714L852 588",
  "M910 724L893 742L891 750",
  "M1020 658L1035 668L1049 670L1048 650L1040 636L1028 635L1010 648L1003 680L1010 698L1026 710L1058 703",
  "M1098 628L1100 650L1117 685L1134 706M1152 644L1138 641L1125 650L1088 718",
  "M1201 657L1182 658L1162 680L1148 700L1150 712L1180 715L1228 717",
  "M1235 688L1240 700L1255 703L1272 690L1272 675L1262 667L1248 667L1230 680L1222 700L1240 730L1265 741L1290 741L1310 735",
  "M1330 548L1326 620L1318 665L1312 763",
  "M206 954L210 970L208 1000L195 1060L180 1122L188 1095L190 1060M193 1010L198 985L230 980L247 990L248 1018L210 1050L192 1050L190 1042",
  "M336 896L331 888L325 970L315 1055L328 1063M325 985L310 975L292 977L272 1000L270 1020L277 1033L315 1032L326 1010L325 990",
  "M475 888L462 867L445 853L434 862L422 910L416 1090M386 967L380 958L472 958",
  "M587 1111L597 1089L610 1096",
  "M241 1253L232 1300L232 1350L229 1440L247 1465L256 1442M241 1253L247 1290L242 1340L222 1410L215 1435L172 1473L155 1450L160 1430L190 1405L225 1402",
  "M284 1402L290 1402L286 1458L305 1438L322 1390L322 1430L331 1463L346 1459",
  "M368 1423L385 1420L404 1410L402 1402L388 1399L370 1408L361 1425L365 1445L385 1455L420 1459L462 1441",
  "M578 1280L576 1293L557 1333L555 1345L535 1412L547 1459L575 1447L584 1405L572 1390L545 1390L537 1405",
  "M708 1263L695 1278M706 1268L672 1332L640 1410L622 1437L597 1500L596 1511L606 1511",
  "M784 1331L782 1345L768 1380L765 1400L748 1438",
  "M865 1275L858 1290L852 1340L847 1360L855 1367L915 1363L924 1377L910 1390L845 1430L838 1416M882 1294L893 1286L920 1293L935 1297L987 1306",
];

const Ink = () => (
  <svg className="pointer-events-none absolute top-0 left-0 h-[1640px] w-[2360px]" viewBox="0 0 2360 1640" fill="none" stroke="#ff3420" strokeWidth="4.400" strokeLinecap="round" strokeLinejoin="round">
    <g transform="translate(1110 420) scale(0.70153 0.33333)">{inkTop.map((d, i) => <path key={i} d={d} vectorEffect="non-scaling-stroke" />)}</g>
    <g transform="translate(780 600) scale(0.56122 0.33333)">{inkSheet.map((d, i) => <path key={i} d={d} vectorEffect="non-scaling-stroke" />)}</g>
    <g transform="translate(1210 810) scale(0.33333)">{inkGlyphs.map((d, i) => <path key={i} d={d} vectorEffect="non-scaling-stroke" />)}</g>
    <g transform="translate(1640 740) scale(0.44643 0.45918)">{inkRight.map((d, i) => <path key={i} d={d} vectorEffect="non-scaling-stroke" />)}</g>
  </svg>
);

export default function App() {
  return (
    <div className="relative h-[1640px] w-[2360px] overflow-hidden bg-[#26192a] font-['Inter','Noto_Sans_CJK_TC',sans-serif]">
      <MenuBar />
      <div className="flex h-[1590px] w-full flex-col overflow-hidden rounded-[20px] border-2 border-[#5e5f61] bg-[#0d1117]">
        <div className="-mx-[2px] flex shrink-0 flex-col"><TabStrip /><Toolbar /></div>
        <div className="flex flex-1">
          <div className="w-[62px] shrink-0" />
          <div className="flex w-[1658px] shrink-0 flex-col border-x-2 border-[#2b3037]">
            <div className="flex h-[98px] shrink-0 items-center border-b-2 border-[#2b3037] pl-[34px]">
              <svg className="h-[26px] w-[30px]" viewBox="0 0 30 26" stroke="#8b949e" strokeWidth="3" strokeLinecap="round"><path d="M1.800 2.500H2.200M1.800 12.500H2.200M1.800 22.500H2.200M10 2.500H27M10 12.500H27M10 22.500H27" /></svg>
              <div className="ml-[32px] pt-[5px] text-[27.600px] font-semibold text-[#c9d1d9]">README.md</div>
            </div>
            <div className="flex flex-col pl-[64px] text-[#c9d1d9]">
              <FileList />
              <div className="flex h-[132px] items-center pt-[30px] text-[31.200px] font-bold tracking-[-0.200px]">Excel畫面</div>
              <Sheet />
              <div className="flex h-[132px] items-center pt-[30px] text-[31px] font-semibold">Word count</div>
              <Notepad />
            </div>
          </div>
        </div>
      </div>
      <Ink />
      <ShareBar />
      <Speaking />
      <DrawBar />
      <svg className="absolute top-[266px] left-[1800px] h-[40px] w-[26px]" viewBox="0 0 26 40"><path d="M1.500 2.500V33L8.500 27L13 38L18 36L13.500 25H23.500Z" fill="#000" stroke="#fff" strokeWidth="2.200" /></svg>
    </div>
  );
}
